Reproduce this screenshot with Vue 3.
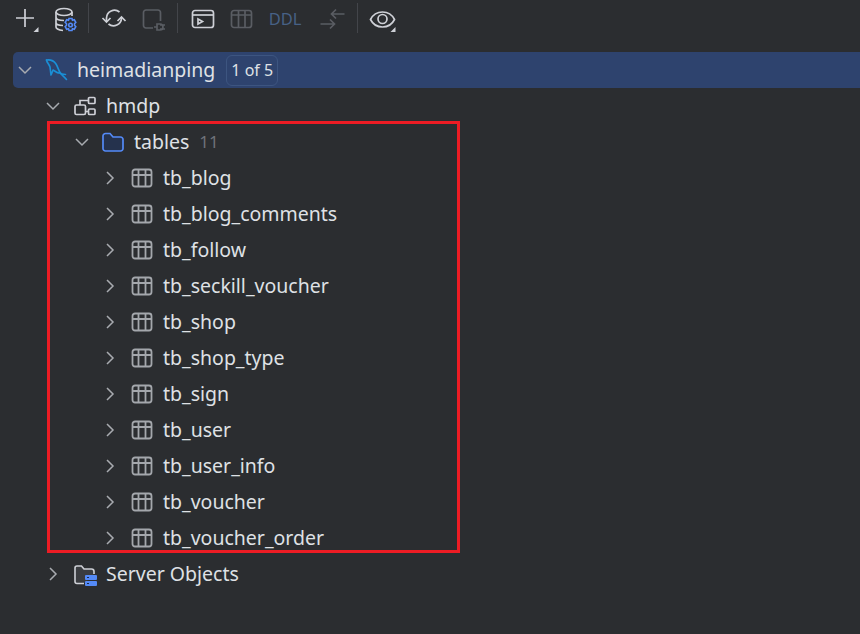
<template>
  <div class="panel">
    <div class="toolbar">
      <div class="tool">
        <svg width="28" height="28" viewBox="0 0 28 28">
          <path d="M14 5v18M5 14h18" class="s-light" />
          <path d="M27.500 23v5h-5z" fill="#ced0d6" />
        </svg>
      </div>
      <div class="tool">
        <svg width="28" height="28" viewBox="0 0 28 28">
          <ellipse cx="14" cy="8" rx="8" ry="3.500" class="s-light" />
          <path d="M6 8v15c0 2 3 3 7 3.500M22 8v4M6 13c0 2 3 3.500 8 3.500M6 18.500c0 2 3 3 7 3" class="s-light" />
          <path d="M19 14.500h3l.5 1.800 1.800-.5 1.500 2.600-1.300 1.400v1.400l1.300 1.400-1.500 2.600-1.800-.5-.5 1.800h-3l-.5-1.800-1.800.5-1.500-2.600 1.300-1.400v-1.400l-1.300-1.400 1.500-2.600 1.800.5z" fill="#2b2d30" stroke="#548af7" stroke-width="1.600" />
          <circle cx="20.500" cy="21" r="1.800" fill="none" stroke="#548af7" stroke-width="1.600" />
        </svg>
      </div>
      <div class="sep"></div>
      <div class="tool">
        <svg width="28" height="28" viewBox="0 0 28 28">
          <path d="M6.500 18v-4a8 8 0 0 1 13-6M21.500 13v1a8 8 0 0 1-13 6" class="s-light" />
          <path d="M2.500 14l4 4 4-4M17.500 17l4-4 4 4" class="s-light" />
        </svg>
      </div>
      <div class="tool">
        <svg width="28" height="28" viewBox="0 0 28 28">
          <path d="M14 24H7a2.500 2.500 0 0 1-2.500-2.500v-13A2.500 2.500 0 0 1 7 6h12a2.500 2.500 0 0 1 2.500 2.500V17" class="s-dim" />
          <path d="M18 20h3a3 3 0 0 1 0 6h-3zM21 21h5M21 25h5M18 23h-3" class="s-dim" />
        </svg>
      </div>
      <div class="sep"></div>
      <div class="tool">
        <svg width="28" height="28" viewBox="0 0 28 28">
          <rect x="3.500" y="6.500" width="21" height="17" rx="2.500" class="s-light" />
          <path d="M4 11h20" class="s-light" />
          <path d="M9 15l4.500 2.500L9 20z" class="s-light" />
        </svg>
      </div>
      <div class="tool">
        <svg width="28" height="28" viewBox="0 0 28 28">
          <rect x="3.500" y="6.500" width="20" height="17" rx="2.500" class="s-dim" />
          <path d="M4 11h19M10.500 7v16M17 7v16" class="s-dim" />
        </svg>
      </div>
      <div class="tool tool-ddl">DDL</div>
      <div class="tool tool-arrows">
        <svg width="28" height="28" viewBox="0 0 28 28">
          <path d="M27.500 10H15M19 5.500L14.500 10l4.500 4.500M3.500 20H17M13 15.500l4.500 4.500-4.500 4.500" class="s-dim" />
        </svg>
      </div>
      <div class="sep"></div>
      <div class="tool">
        <svg width="28" height="28" viewBox="0 0 28 28">
          <path d="M1.500 15.500C4 10.500 8.500 8 13.500 8s9.500 2.500 12 7.500C23 20.500 18.500 23 13.500 23S4 20.500 1.500 15.500z" class="s-light" />
          <circle cx="13.500" cy="15" r="4.500" class="s-light" />
          <path d="M26.500 23v5h-5z" fill="#ced0d6" />
        </svg>
      </div>
    </div>

    <div class="tree">
      <div class="row row-selected depth-0">
        <svg class="chevron" width="18" height="18" viewBox="0 0 18 18"><path d="M3 6l6 6 6-6" /></svg>
        <svg class="icon" width="22" height="22" viewBox="0 0 22 22">
          <g fill="none" stroke="#1a8fd6" stroke-width="1.600" stroke-linejoin="round" stroke-linecap="round">
            <path d="M1.500 1C5 .5 9 2 11 5c2 3 2.500 7 5 10 1.500 1.500 3 2.500 5.500 5.500" />
            <path d="M14 13.500c2 1.500 5 2 6.500 2" />
            <path d="M1.500 1c.5 3 2.500 4 3.500 7 .5 3 .5 5 1 8 1-2 1.500-4 2-5 2 1 4 3 6 3" />
          </g>
        </svg>
        <span class="name">heimadianping</span>
        <span class="match">1 of 5</span>
      </div>
      <div class="row depth-1">
        <svg class="chevron" width="18" height="18" viewBox="0 0 18 18"><path d="M3 6l6 6 6-6" /></svg>
        <svg class="icon" width="22" height="22" viewBox="0 0 22 22">
          <rect x="1" y="10" width="10.500" height="9.500" rx="1.500" class="s-light" />
          <rect x="14.500" y="2.500" width="6.500" height="6" rx="1" class="s-light" />
          <rect x="14.500" y="14" width="6.500" height="5.500" rx="1" class="s-light" />
          <path d="M6 10V5.500h8.500M11.500 16.500h3" class="s-light" />
        </svg>
        <span class="name">hmdp</span>
      </div>
      <div class="row depth-2">
        <svg class="chevron" width="18" height="18" viewBox="0 0 18 18"><path d="M3 6l6 6 6-6" /></svg>
        <svg class="icon" width="22" height="22" viewBox="0 0 22 22">
          <path d="M1 5a2.500 2.500 0 0 1 2.500-2.500h4.500L11 6h7.500A2.500 2.500 0 0 1 21 8.500v9a2.500 2.500 0 0 1-2.500 2.500h-15A2.500 2.500 0 0 1 1 17.500z" fill="#25324d" stroke="#548af7" stroke-width="1.700" />
        </svg>
        <span class="name">tables</span>
        <span class="count">11</span>
      </div>
      <div v-for="table in tables" :key="table" class="row depth-3">
        <svg class="chevron" width="18" height="18" viewBox="0 0 18 18"><path d="M6 3l6 6-6 6" /></svg>
        <svg class="icon" width="22" height="22" viewBox="0 0 22 22">
          <rect x="1.500" y="2.500" width="19" height="17" rx="2.500" class="s-table" />
          <path d="M2 8h18M7.500 3v16M14.500 3v16" class="s-table" />
        </svg>
        <span class="name">{{ table }}</span>
      </div>
      <div class="row depth-1">
        <svg class="chevron" width="18" height="18" viewBox="0 0 18 18"><path d="M6 3l6 6-6 6" /></svg>
        <svg class="icon" width="22" height="22" viewBox="0 0 22 22">
          <path d="M10 20.500H3A2 2 0 0 1 1 18.500V5a2 2 0 0 1 2-2h4.500L10 6h7.500a2.500 2.500 0 0 1 2.500 2.500V11" fill="#3a3c40" stroke="#ced0d6" stroke-width="1.600" />
          <rect x="11" y="12" width="12" height="5" rx="1" fill="#548af7" />
          <rect x="11" y="18" width="12" height="5" rx="1" fill="#548af7" />
          <path d="M13 14.500h2M13 20.500h2" stroke="#1e2a44" stroke-width="1.200" />
        </svg>
        <span class="name">Server Objects</span>
      </div>
      <div class="highlight"></div>
    </div>
  </div>
</template>

<script setup>
const tables = [
  'tb_blog',
  'tb_blog_comments',
  'tb_follow',
  'tb_seckill_voucher',
  'tb_shop',
  'tb_shop_type',
  'tb_sign',
  'tb_user',
  'tb_user_info',
  'tb_voucher',
  'tb_voucher_order'
]
</script>

<style>
html, body {
  margin: 0;
  background: #2b2d30;
}
</style>

<style scoped>
.panel {
  width: 860px;
  height: 634px;
  overflow: hidden;
  background: #2b2d30;
  color: #dfe1e5;
  font-family: "Noto Sans", Inter, sans-serif;
  font-size: 19.5px;
}

.toolbar {
  display: flex;
  align-items: center;
  height: 36px;
  padding-left: 5px;
}

.tool {
  display: flex;
  align-items: center;
  justify-content: center;
  width: 39px;
  height: 36px;
}

.tool-ddl {
  width: 48px;
  color: #476186;
  font-size: 16.5px;
}

.tool-arrows {
  width: 43px;
}

.sep {
  width: 1px;
  height: 30px;
  margin: 0 5px;
  background: #43454a;
}

svg {
  fill: none;
  flex: none;
  overflow: visible;
}

.s-light,
.s-dim,
.s-table {
  fill: none;
  stroke-width: 1.700;
}

.s-light { stroke: #ced0d6; }
.s-dim { stroke: #5a5d63; }
.s-table { stroke: #a4a7ac; stroke-width: 1.800; }

.tree {
  position: relative;
  margin-top: 16px;
}

.row {
  display: flex;
  align-items: center;
  height: 36px;
  white-space: nowrap;
}

.depth-0 { padding-left: 16px; }
.depth-1 { padding-left: 44px; }
.depth-2 { padding-left: 73px; }
.depth-3 { padding-left: 101px; }

.row-selected {
  margin-left: 13px;
  padding-left: 3px;
  background: #2e436e;
  border-radius: 5px 0 0 5px;
}

.chevron {
  margin-right: 11px;
}

.depth-1 .chevron,
.depth-3 .chevron {
  margin-right: 12px;
}

.chevron path {
  stroke: #a8abb0;
  stroke-width: 1.500;
}

.icon {
  margin-right: 10px;
}

.name {
  padding-bottom: 2px;
}

.match {
  margin-left: 11px;
  padding: 0 4px;
  height: 31px;
  box-sizing: border-box;
  line-height: 28px;
  font-size: 16px;
  border: 1px solid #3d5580;
  border-radius: 6px;
}

.count {
  margin-left: 10px;
  padding-bottom: 2px;
  font-size: 17px;
  color: #6f737a;
}

.highlight {
  position: absolute;
  left: 47px;
  top: 69px;
  width: 407px;
  height: 426px;
  border: 3px solid #ed1c24;
  pointer-events: none;
}
</style>
